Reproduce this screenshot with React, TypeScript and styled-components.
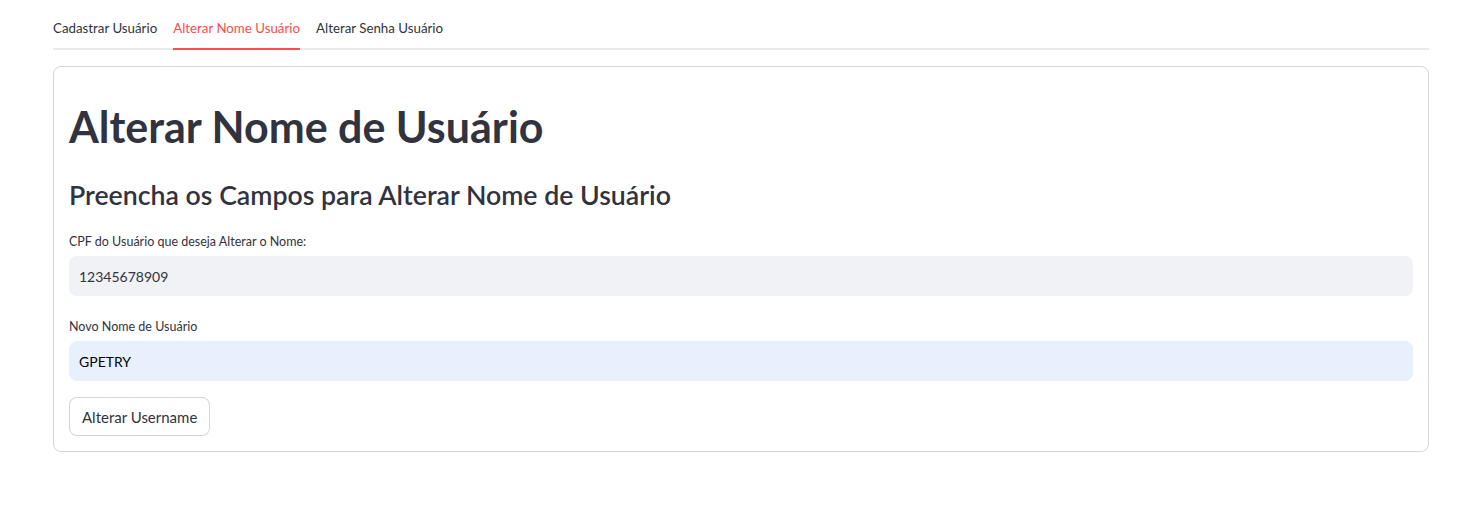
import React, { useState } from "react";
import styled, { createGlobalStyle } from "styled-components";

const GlobalStyle = createGlobalStyle`
  html, body {
    margin: 0;
    padding: 0;
    background: #ffffff;
  }
  body {
    font-family: "Source Sans Pro", Lato, "Liberation Sans", sans-serif;
    color: rgb(49, 51, 63);
    -webkit-font-smoothing: antialiased;
  }
  * { box-sizing: border-box; }
`;

const Page = styled.main`
  padding: 8px 54px 0 53px;
`;

const TabList = styled.div`
  display: flex;
  gap: 16px;
  height: 42px;
  border-bottom: 2px solid rgba(49, 51, 63, 0.1);
`;

const Tab = styled.button<{ $active?: boolean }>`
  appearance: none;
  background: none;
  border: none;
  padding: 0 0 1px;
  margin: 0 0 -2px;
  height: 42px;
  display: flex;
  align-items: center;
  font-family: inherit;
  font-size: 13.3px;
  cursor: pointer;
  color: ${(p) => (p.$active ? "#ff4b4b" : "rgb(49, 51, 63)")};
  border-bottom: 2px solid ${(p) => (p.$active ? "#ff4b4b" : "transparent")};
`;

const Card = styled.section`
  margin-top: 16px;
  border: 1px solid rgba(49, 51, 63, 0.2);
  border-radius: 8px;
  padding: 15px;
  display: flex;
  flex-direction: column;
`;

const Title = styled.h1`
  margin: 18px 0 0;
  font-size: 43px;
  line-height: 53px;
  font-weight: 700;
  color: rgb(49, 51, 63);
`;

const Subtitle = styled.h2`
  margin: 24px 0 0;
  font-size: 26.7px;
  line-height: 36px;
  font-weight: 600;
  color: rgb(49, 51, 63);
`;

const Field = styled.div<{ $top: number }>`
  display: flex;
  flex-direction: column;
  margin-top: ${(p) => p.$top}px;
`;

const Label = styled.label`
  font-size: 12.5px;
  line-height: 24px;
  min-height: 27px;
  padding-top: 3px;
  margin-bottom: 2px;
  display: flex;
  align-items: center;
`;

const Input = styled.input<{ $autofill?: boolean }>`
  height: 40px;
  width: 100%;
  border: none;
  outline: none;
  border-radius: 8px;
  padding: 0 10px;
  font-family: inherit;
  font-size: 14px;
  background: ${(p) => (p.$autofill ? "rgb(232, 240, 254)" : "#f0f2f6")};
  color: ${(p) => (p.$autofill ? "#000000" : "rgb(49, 51, 63)")};
`;

const Button = styled.button`
  align-self: flex-start;
  margin-top: 16px;
  height: 39px;
  padding: 0 12px;
  background: #ffffff;
  border: 1px solid rgba(49, 51, 63, 0.2);
  border-radius: 8px;
  font-family: inherit;
  font-size: 15px;
  color: rgb(49, 51, 63);
  cursor: pointer;
`;

const tabs = ["Cadastrar Usuário", "Alterar Nome Usuário", "Alterar Senha Usuário"];

export default function App() {
  const [active, setActive] = useState(1);
  return (
    <>
      <GlobalStyle />
      <Page>
        <TabList role="tablist">
          {tabs.map((t, i) => (
            <Tab key={t} role="tab" $active={i === active} onClick={() => setActive(i)}>
              {t}
            </Tab>
          ))}
        </TabList>
        <Card>
          <Title>Alterar Nome de Usuário</Title>
          <Subtitle>Preencha os Campos para Alterar Nome de Usuário</Subtitle>
          <Field $top={14}>
            <Label htmlFor="cpf">CPF do Usuário que deseja Alterar o Nome:</Label>
            <Input id="cpf" defaultValue="12345678909" />
          </Field>
          <Field $top={16}>
            <Label htmlFor="nome">Novo Nome de Usuário</Label>
            <Input id="nome" $autofill defaultValue="GPETRY" />
          </Field>
          <Button>Alterar Username</Button>
        </Card>
      </Page>
    </>
  );
}
